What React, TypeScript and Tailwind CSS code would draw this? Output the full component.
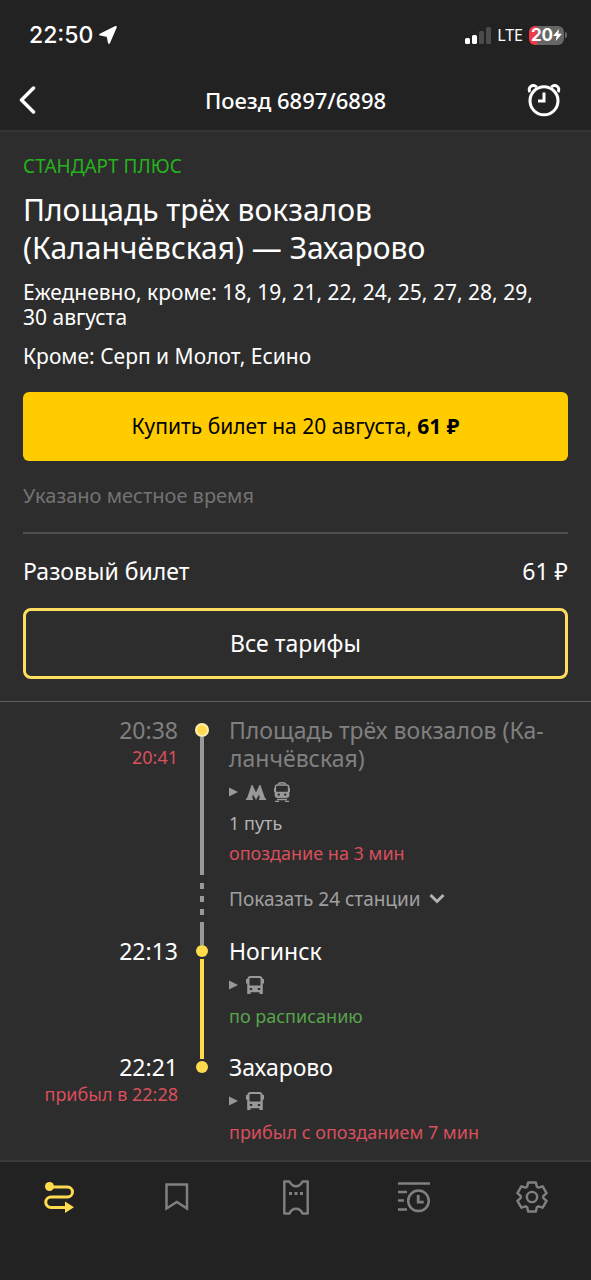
import type { ReactNode } from "react";

function TrainIcon() {
  return (
    <svg width="16" height="20" viewBox="0 0 16 20" fill="none">
      <path d="M4 1.6Q8 0 12 1.6" stroke="currentColor" strokeWidth="1.5" />
      <rect x="1.4" y="3" width="13.2" height="12" rx="2" stroke="currentColor" strokeWidth="1.5" />
      <path d="M1 9.8h14v3.400q0 2.500-2.500 2.500h-9Q1 15.700 1 13.200z" fill="currentColor" />
      <circle cx="4.8" cy="12.6" r="1.2" fill="#2d2d2d" />
      <circle cx="11.2" cy="12.6" r="1.2" fill="#2d2d2d" />
      <path d="M.6 6v4M15.400 6v4M3 17.500h10M1 19.300h4M11 19.300h4" stroke="currentColor" strokeWidth="1.3" />
    </svg>
  );
}

function BusIcon() {
  return (
    <svg width="18" height="18" viewBox="0 0 18 18">
      <path
        fill="currentColor"
        fillRule="evenodd"
        d="M4.500 0h9q2.800 0 3.200 3H18v4.500h-1.200V18h-3.300v-1.800h-9V18H1.200V7.500H0V3h1.300Q1.700 0 4.500 0zM3.500 3v6.500h11V3q0-1-1-1h-9q-1 0-1 1zM3.800 12v2h2.400v-2zM11.800 12v2h2.400v-2z"
      />
    </svg>
  );
}

function MetroIcon() {
  return (
    <svg width="20" height="15" viewBox="0 0 20 15">
      <path
        fill="currentColor"
        d="M0 15v-1.700h1L5.500 0h1L10 7.500 13.500 0h1L19 13.300h1V15h-7v-1.700h.9l-.9-3.800-3 5.500-3-5.500-.9 3.800H7V15z"
      />
    </svg>
  );
}

function Transfers({ children }: { children: ReactNode }) {
  return (
    <div className="flex h-10 items-center gap-2 text-[#999999]">
      <svg width="9" height="10" viewBox="0 0 9 10">
        <path d="M0 0.5L9 5L0 9.5z" fill="currentColor" />
      </svg>
      {children}
    </div>
  );
}

interface StopProps {
  time: string;
  fact?: string;
  name: string;
  past?: boolean;
  rail: ReactNode;
  children: ReactNode;
}

function Stop({ time, fact, name, past, rail, children }: StopProps) {
  return (
    <li className="grid grid-cols-[178px_48px_1fr]">
      <div className="text-right">
        <div className={past ? "text-[23px] leading-7 text-[#808080]" : "text-[23px] leading-7"}>{time}</div>
        {fact && <div className="text-[18px] leading-[26px] text-[#d94f5c]">{fact}</div>}
      </div>
      <div className="flex flex-col items-center">{rail}</div>
      <div className="pl-[3px] pr-6 text-[18px] leading-[22px]">
        <div className={past ? "text-[23px] leading-7 text-[#808080]" : "text-[23px] leading-7"}>{name}</div>
        {children}
      </div>
    </li>
  );
}

function StatusBar() {
  return (
    <div className="flex h-[70px] items-center justify-between pl-[29px] pr-6 font-['Inter',sans-serif]">
      <div className="flex items-center gap-1.5 text-[23px] font-medium">
        22:50
        <svg width="18" height="18" viewBox="0 0 18 18">
          <path d="M16.8 1L10 16.8L8.6 10L1.2 8.6z" fill="white" stroke="white" strokeWidth="2" strokeLinejoin="round" />
        </svg>
      </div>
      <div className="flex items-center gap-1.5">
        <svg width="26" height="17" viewBox="0 0 26 17">
          <rect x="0" y="11" width="5" height="6" rx="1.5" fill="white" />
          <rect x="7" y="8" width="5" height="9" rx="1.5" fill="white" />
          <rect x="14" y="4" width="5" height="13" rx="1.5" fill="#4b4b4b" />
          <rect x="21" y="0" width="5" height="17" rx="1.5" fill="#4b4b4b" />
        </svg>
        <span className="font-['Noto_Sans',sans-serif] text-[16px]">LTE</span>
        <div className="flex items-center gap-px">
          <div className="flex h-[19px] w-[35px] items-center justify-center rounded-md bg-[linear-gradient(90deg,#f03a45_22%,#666666_22%)] text-[17px] font-bold leading-[19px]">
            20
            <svg width="9" height="12" viewBox="0 0 9 12">
              <path d="M6 0L0 7h3.6L2.8 12L9 4.8H5.4z" fill="white" />
            </svg>
          </div>
          <div className="h-[6px] w-[2px] rounded-r bg-[#666666]" />
        </div>
      </div>
    </div>
  );
}

const tabs = [
  {
    label: "Маршруты",
    icon: (
      <svg width="30" height="32" viewBox="0 0 30 32" fill="none">
        <path d="M6 6h17.5a5 5 0 0 1 0 10H7a5 5 0 0 0 0 10.500h16" stroke="currentColor" strokeWidth="3" />
        <circle cx="5.5" cy="5.5" r="4.5" fill="currentColor" />
        <path d="M21 20.500L30 26.300L21 32z" fill="currentColor" />
      </svg>
    ),
  },
  {
    label: "Избранное",
    icon: (
      <svg width="24" height="30" viewBox="0 0 24 30" fill="none">
        <path d="M1.500 2.500h20.500v24L11.800 20L1.500 26.500z" stroke="currentColor" strokeWidth="2.5" />
      </svg>
    ),
  },
  {
    label: "Билеты",
    icon: (
      <svg width="26" height="35" viewBox="0 0 26 35" fill="none">
        <path
          d="M1.300 1.500H6.500C8 4.600 10 6.300 13 6.300S18 4.600 19.500 1.500h5.200v32h-5.200c-1.300-3.200-3.500-4.800-6.500-4.800s-5.200 1.600-6.500 4.800H1.300z"
          stroke="currentColor"
          strokeWidth="2.4"
          strokeLinejoin="round"
        />
        <path d="M6 13.500h3M11.500 13.500h3M17 13.500h3" stroke="currentColor" strokeWidth="3" />
      </svg>
    ),
  },
  {
    label: "Расписание",
    icon: (
      <svg width="32" height="32" viewBox="0 0 32 32" fill="none">
        <path d="M0 2.500h32M0 11h9M0 19.500h6M0 28.500h9" stroke="currentColor" strokeWidth="2.6" />
        <circle cx="20.5" cy="19.8" r="10.3" stroke="currentColor" strokeWidth="2.5" />
        <path d="M20.200 14v7.200h5.500" stroke="currentColor" strokeWidth="2.8" />
      </svg>
    ),
  },
  {
    label: "Настройки",
    icon: (
      <svg width="32" height="32" viewBox="-16.5 -16.5 33 33" fill="none">
        <path
          d="M-4-15H4L5-10.500L6.600-9.600L11-11L15-4L11.600-.9V.9L15 4L11 11L6.600 9.600L5 10.500L4 15H-4L-5 10.500L-6.600 9.600L-11 11L-15 4L-11.600 .9V-.9L-15-4L-11-11L-6.600-9.600L-5-10.500z"
          stroke="currentColor"
          strokeWidth="2.5"
          strokeLinejoin="round"
        />
        <circle r="5.3" stroke="currentColor" strokeWidth="2.5" />
      </svg>
    ),
  },
];

export default function App() {
  return (
    <div className="min-h-screen bg-[#222222] font-['Noto_Sans',sans-serif] text-white">
      <header className="border-b-2 border-[#363636]">
        <StatusBar />
        <div className="grid h-[60px] grid-cols-[1fr_auto_1fr] items-center px-[18px]">
          <button aria-label="Назад" className="justify-self-start">
            <svg width="18" height="28" viewBox="0 0 18 28" fill="none">
              <path d="M15.500 2L3.500 14L15.500 26" stroke="white" strokeWidth="3.5" strokeLinecap="round" strokeLinejoin="round" />
            </svg>
          </button>
          <h1 className="text-[22px] font-medium leading-7">Поезд 6897/6898</h1>
          <button aria-label="Напоминание" className="mr-3 justify-self-end">
            <svg width="34" height="34" viewBox="0 0 34 34" fill="none" stroke="white" strokeWidth="3">
              <circle cx="17" cy="17.8" r="14" />
              <path d="M3 9A3.900 3.900 0 1 1 9.500 4.200M24.500 4.200A3.900 3.900 0 1 1 31 9" />
              <path d="M17 9.500V18H11" />
            </svg>
          </button>
        </div>
      </header>

      <main className="bg-[#2d2d2d]">
        <section className="border-b border-[#5e5e5e] px-[23px] py-[22px]">
          <div className="text-[19px] leading-6 text-[#25b31c]">СТАНДАРТ ПЛЮС</div>
          <h2 className="mt-[13px] text-[30px] leading-[38px]">
            Площадь трёх вокзалов
            <br />
            (Каланчёвская) — Захарово
          </h2>
          <p className="mt-[13px] text-[21px] leading-[25px]">
            Ежедневно, кроме: 18, 19, 21, 22, 24, 25, 27, 28, 29, 30&nbsp;августа
          </p>
          <p className="mt-[14px] text-[21px] leading-[25px]">Кроме: Серп и Молот, Есино</p>
          <button className="mt-[23px] flex h-[69px] w-full items-center justify-center rounded-md bg-[#ffcc00] text-[21px] text-black">
            <span>
              Купить билет на 20 августа, <b>61 ₽</b>
            </span>
          </button>
          <div className="mt-[22px] text-[20px] leading-[26px] text-[#737373]">Указано местное время</div>
          <div className="mt-[23px] flex justify-between border-t-2 border-[#505050] pt-[21px] text-[23px] leading-8">
            <span>Разовый билет</span>
            <span>61 ₽</span>
          </div>
          <button className="mt-[21px] h-[71px] w-full rounded-lg border-[3px] border-[#ffdd60] text-[23px]">
            Все тарифы
          </button>
        </section>

        <ol className="pb-[17px] pt-[14px]">
          <Stop
            time="20:38"
            fact="20:41"
            name={"Площадь трёх вокзалов (Ка\u00adланчёвская)"}
            past
            rail={
              <>
                <div className="mt-[7px] size-[14px] rounded-full border-2 border-[#ffeeb0] bg-[#ffdb4d]" />
                <div className="mb-0.5 w-1 flex-1 bg-[#999999]" />
              </>
            }
          >
            <Transfers>
              <MetroIcon />
              <TrainIcon />
            </Transfers>
            <div className="text-[#b3b3b3]">1 путь</div>
            <div className="mb-[13px] mt-2 text-[#d94f5c]">опоздание на 3 мин</div>
          </Stop>
          <li className="grid grid-cols-[178px_48px_1fr]">
            <div />
            <div className="flex flex-col items-center gap-[7px] pt-1.5">
              <div className="h-1.5 w-1 bg-[#999999]" />
              <div className="h-1.5 w-1 bg-[#999999]" />
              <div className="h-1.5 w-1 bg-[#999999]" />
              <div className="w-1 flex-1 bg-[#999999]" />
            </div>
            <button className="mb-[26px] mt-[10px] flex items-center gap-2 pl-[3px] text-[19px] leading-6 text-[#a0a0a0]">
              Показать 24 станции
              <svg width="16" height="12" viewBox="0 0 16 12" fill="none">
                <path d="M1.500 2L8 8.500L14.500 2" stroke="#b3b3b3" strokeWidth="3" />
              </svg>
            </button>
          </li>
          <Stop
            time="22:13"
            name="Ногинск"
            rail={
              <>
                <div className="h-2 w-1 bg-[#999999]" />
                <div className="size-3 rounded-full bg-[#ffdb4d]" />
                <div className="mt-0.5 w-1 flex-1 bg-[#ffdb4d]" />
              </>
            }
          >
            <Transfers>
              <BusIcon />
            </Transfers>
            <div className="mb-[26px] text-[#58a44c]">по расписанию</div>
          </Stop>
          <Stop
            time="22:21"
            fact="прибыл в 22:28"
            name="Захарово"
            rail={
              <>
                <div className="mb-0.5 h-1.5 w-1 bg-[#ffdb4d]" />
                <div className="size-3 rounded-full bg-[#ffdb4d]" />
              </>
            }
          >
            <Transfers>
              <BusIcon />
            </Transfers>
            <div className="text-[#d94f5c]">прибыл с опозданием 7 мин</div>
          </Stop>
        </ol>
      </main>

      <nav className="flex border-t-2 border-[#3a3a3a] pb-12 text-[#808080]">
        {tabs.map((tab, i) => (
          <button
            key={tab.label}
            aria-label={tab.label}
            className={
              i === 0
                ? "flex h-[70px] flex-1 items-center justify-center text-[#ffdb4d]"
                : "flex h-[70px] flex-1 items-center justify-center"
            }
          >
            {tab.icon}
          </button>
        ))}
      </nav>
    </div>
  );
}
